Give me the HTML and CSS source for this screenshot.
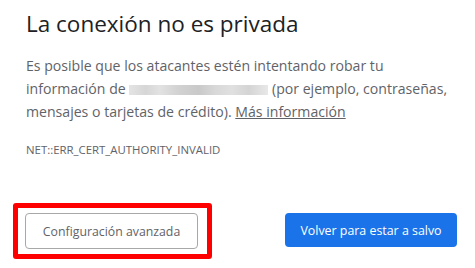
FILE: index.html
```html
<!DOCTYPE html>
<html lang="es">
<head>
<meta charset="utf-8">
<link rel="stylesheet" href="styles.css">
</head>
<body>
<div class="page">
  <h1 class="title">La conexión no es privada</h1>
  <p class="desc">Es posible que los atacantes estén intentando robar tu información de <span class="blur"></span> (por ejemplo, contraseñas, mensajes o tarjetas de crédito). <a class="more" href="#">Más información</a></p>
  <div class="code">NET::ERR_CERT_AUTHORITY_INVALID</div>
  <div class="actions">
    <div class="highlight">
      <button class="btn-secondary">Configuración avanzada</button>
    </div>
    <button class="btn-primary">Volver para estar a salvo</button>
  </div>
</div>
</body>
</html>
```
FILE: styles.css
```css
html, body {
  margin: 0;
  padding: 0;
  background: #ffffff;
}
.page {
  width: 475px;
  height: 268px;
  box-sizing: border-box;
  font-family: "Open Sans", "Noto Sans", sans-serif;
  display: flex;
  flex-direction: column;
}
.title {
  margin: 6px 0 0 26px;
  font-size: 22.5px;
  font-weight: 400;
  color: #202124;
  line-height: 36px;
}
.desc {
  margin: 12px 12px 0 26px;
  font-size: 14.1px;
  line-height: 23px;
  color: #5f6368;
}
.blur {
  display: inline-block;
  width: 139px;
  height: 10px;
  vertical-align: -1px;
  background: linear-gradient(90deg, #e4e4e4 0%, #d6d6d6 12%, #e2e2e2 22%, #d2d2d2 35%, #c9c9c9 50%, #d8d8d8 62%, #e0e0e0 74%, #d4d4d4 86%, #e8e8e8 100%);
}
.more {
  color: #5f6368;
  text-decoration: underline;
}
.code {
  margin: 19px 0 0 26px;
  font-size: 11.4px;
  line-height: 16px;
  color: #5f6368;
}
.actions {
  margin-top: 45px;
  padding: 0 18px 0 13px;
  display: flex;
  justify-content: space-between;
  align-items: center;
}
.highlight {
  border: 5px solid #ff0000;
  border-radius: 3px;
  padding: 5px 9px 5px 7px;
  display: flex;
}
.btn-secondary {
  width: 173px;
  height: 36px;
  border: 1px solid #a8a8a8;
  border-radius: 4px;
  background: #ffffff;
  color: #5f6368;
  font-family: "Open Sans", "Noto Sans", sans-serif;
  font-size: 12.3px;
  padding: 0;
}
.btn-primary {
  width: 172px;
  height: 34px;
  margin-top: -2px;
  border: none;
  border-radius: 4px;
  background: #1a73e8;
  color: #ffffff;
  font-family: "Open Sans", "Noto Sans", sans-serif;
  font-size: 12.4px;
  padding: 0;
}
```
